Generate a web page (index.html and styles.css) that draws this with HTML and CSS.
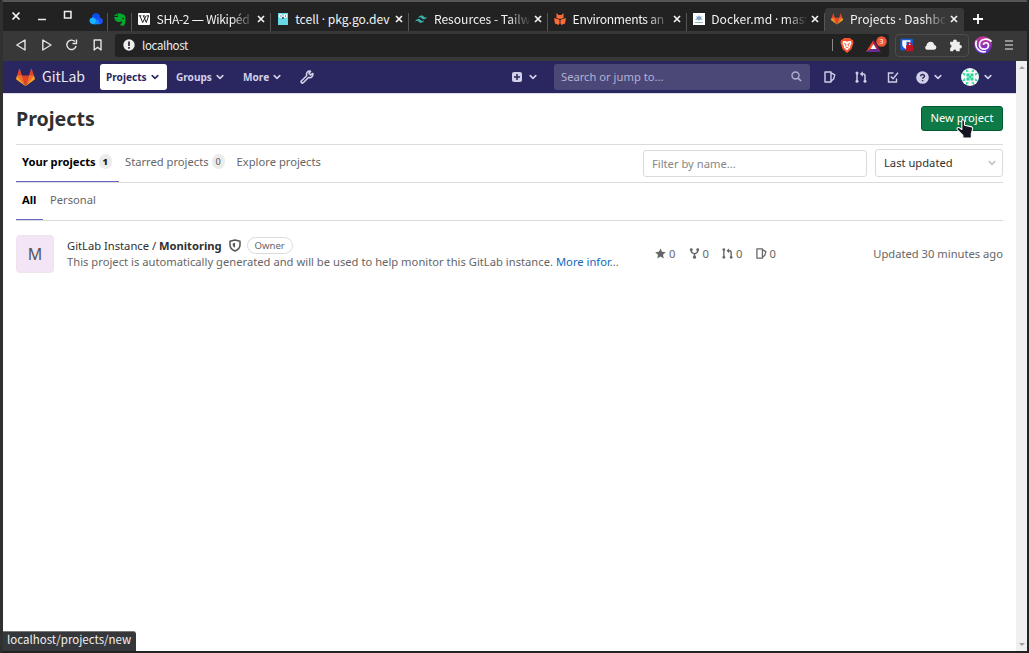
FILE: index.html
```html
<!DOCTYPE html>
<html lang="en">
<head>
<meta charset="utf-8">
<title>Projects · Dashboard · GitLab</title>
<link rel="stylesheet" href="styles.css">
</head>
<body>
<svg class="defs" width="0" height="0">
  <symbol id="tanuki" viewBox="0 0 36 36">
    <path fill="#e24329" d="M2 14l9.38 9v-9l-4-12.28c-.205-.632-1.176-.632-1.38 0z"/>
    <path fill="#e24329" d="M34 14l-9.38 9v-9l4-12.28c.205-.632 1.176-.632 1.38 0z"/>
    <path fill="#e24329" d="M18 34.38 11.38 14h13.24z"/>
    <path fill="#fc6d26" d="M18 34.38 11.38 14H2l6 8zM18 34.38 24.62 14H34l-6 8z"/>
    <path fill="#fca326" d="M2 14 .1 20.16c-.18.565 0 1.2.5 1.56l17.42 12.66zM34 14l1.9 6.16c.18.565 0 1.2-.5 1.56L18 34.38z"/>
  </symbol>
  <symbol id="chev" viewBox="0 0 10 8"><path d="M2.200 2.600 5 5.300 7.800 2.600" fill="none" stroke="currentColor" stroke-width="1.600" stroke-linecap="round" stroke-linejoin="round"/></symbol>
  <symbol id="close" viewBox="0 0 10 10"><path d="M2 2l6 6m0-6l-6 6" stroke="currentColor" stroke-width="1.700"/></symbol>
  <symbol id="door" viewBox="0 0 12 12"><path d="M1 1h6v10H1zM7 1.800l3.800 2.100L9.600 8 7 10.300" fill="none" stroke="currentColor" stroke-width="1.400" stroke-linejoin="round"/></symbol>
  <symbol id="merge" viewBox="0 0 12 12"><path d="M2 3v7M6.500 3H8.200a1.800 1.800 0 0 1 1.800 1.800V10" fill="none" stroke="currentColor" stroke-width="1.500"/><path d="M7.800.300v5.400L4.900 3z" fill="currentColor"/><circle cx="2" cy="1.900" r="1.500" fill="currentColor"/><circle cx="2" cy="10.200" r="1.500" fill="currentColor"/><circle cx="10" cy="10.200" r="1.500" fill="currentColor"/></symbol>
  <symbol id="fork" viewBox="0 0 12 12"><path d="M2.500 2v1.500Q2.500 5 6 6.500 9.500 5 9.500 3.500V2M6 6v4" fill="none" stroke="currentColor" stroke-width="1.600"/><circle cx="2.500" cy="2" r="1.600" fill="currentColor"/><circle cx="9.500" cy="2" r="1.600" fill="currentColor"/><circle cx="6" cy="10" r="1.700" fill="currentColor"/></symbol>
</svg>
<div class="window">
  <div class="tabbar">
    <div class="controls">
      <svg class="c-close" width="10" height="10"><path d="M1.500 1.500l7 7m0-7l-7 7" stroke="#fff" stroke-width="1.600"/></svg>
      <svg class="c-min" width="10" height="10"><path d="M1 8.500h8" stroke="#eee" stroke-width="1.500"/></svg>
      <svg class="c-max" width="10" height="10"><path d="M1.500 1.500h6.500v6.500h-6.500z" fill="none" stroke="#eee" stroke-width="1.500"/></svg>
    </div>
    <div class="pin pin-a"><svg width="14" height="12" viewBox="0 0 14 12"><circle cx="7" cy="4.200" r="4" fill="#0a4df0"/><circle cx="10.500" cy="8" r="3.300" fill="#1c50f5"/><path fill="#19b4ff" d="M3.500 11.300a3.400 3.400 0 0 1-.7-6.600Q5 4 6.500 6l2 2.500-2 2.800z"/><path fill="#1684ff" d="M5 11.300 8.500 6l2.500 5.300z"/></svg></div>
    <div class="pin pin-b"><svg width="12" height="13" viewBox="0 0 12 13"><path fill="#00a82d" d="M3.500 0v3H0L3 .500zM4 .500C6 0 7 .300 8 1.300c2.500.200 3.300 1 3.500 4 .100 3.500-.5 7-2 7.500H7.500C6 12.300 6 10 8 10.200V8.500C6.500 8.300 6.300 9 5.500 9 2 9 .5 7 .3 4H4z"/><circle cx="9" cy="5.500" r=".8" fill="#222"/></svg></div>
    <div class="tab"><svg class="fav" viewBox="0 0 12 12"><rect width="12" height="12" rx="1" fill="#fff"/><path d="M.8 2.800h2.500M4.800 2.800h2M8.500 2.800H11M2 3l2.700 6.500L8 3M5.500 3l2.800 6.500L10.500 3" fill="none" stroke="#222" stroke-width="1"/></svg><span class="label tight">SHA-2 <i>—</i> Wikipéd</span><svg class="x"><use href="#close"/></svg></div>
    <div class="tab"><svg class="fav" viewBox="0 0 12 12"><path d="M1 0h10v12H1z" fill="#6ad7e5"/><circle cx="3.700" cy="3" r="2" fill="#fff"/><circle cx="8.300" cy="3" r="2" fill="#fff"/><path d="M3.500 2.500h1v1h-1zM8 2.500h1v1H8zM5 4.500h2v1H5z" fill="#111"/></svg><span class="label plain">tcell <i>·</i> pkg.go.dev</span><svg class="x"><use href="#close"/></svg></div>
    <div class="tab"><svg class="fav" viewBox="0 0 12 12"><path fill="#38b2ac" d="M3 5.500q.8-3 3.300-3c2.500 0 2.500 2 4 2q1 0 2-1.200-.8 3-3.300 3c-2.500 0-2.500-2-4-2q-1 0-2 1.200zM0 9q.8-3 3.300-3c2.500 0 2.500 2 4 2q1 0 2-1.200-.8 3-3.300 3c-2.500 0-2.500-2-4-2Q1 7.800 0 9z"/></svg><span class="label">Resources - Tailw</span><svg class="x"><use href="#close"/></svg></div>
    <div class="tab"><svg class="fav" viewBox="0 0 12 12"><path fill="#ff6c37" d="M0 5l5 1.500V12L1 10.500zM12 5 7 6.500V12l4-1.500zM2.500 0l2 2h3l2-2v5L6 6 2.500 5zM5.500 7h1v4h-1z"/></svg><span class="label tight">Environments an</span><svg class="x"><use href="#close"/></svg></div>
    <div class="tab"><svg class="fav" viewBox="0 0 12 12"><path fill="#fff" d="M0 0h12v12H0z"/><path d="M2 9h8v1H2z" fill="#9bb"/><path d="M6 2l1 2 2-1-1 2 2 2-3-.5L6 8 5 6.500 2 7l2-2-1-2 2 1z" fill="#7fa3c6"/></svg><span class="label">Docker.md <i>·</i> mast</span><svg class="x"><use href="#close"/></svg></div>
    <div class="tab active"><svg class="fav"><use href="#tanuki"/></svg><span class="label">Projects <i>·</i> Dashbo</span><svg class="x"><use href="#close"/></svg></div>
    <svg class="plus" width="10" height="10"><path d="M5 0v10M0 5h10" stroke="#fff" stroke-width="1.800"/></svg>
  </div>

  <div class="toolbar">
    <svg class="navicons" width="115" height="30" viewBox="0 0 115 30" fill="none" stroke="#e4e4e4" stroke-width="1.400" stroke-linejoin="round"><path d="M22 10v10l-8.200-5zM39.800 10v10l8.200-5z"/><path d="M72 11.600a4.700 4.700 0 1 0 1.100 4.400M73.500 9.500v4h-4M91.200 10h6.800v10l-3.400-2.700L91.200 20z"/></svg>
    <div class="url">
      <svg width="12" height="12"><circle cx="6" cy="6" r="5.700" fill="#eee"/><path d="M6 2.500v4.500M6 8v1.800" stroke="#222" stroke-width="1.700"/></svg>
      <span class="host">localhost</span>
      <span class="urlsep"></span>
      <svg class="brave" width="14" height="15" viewBox="0 0 14 15"><path fill="#fb542b" d="M4 0h6l1.500 1.500L13 2l.5 3-2 6L7 15l-4.500-4-2-6L1 2l1.500-.5z"/><path fill="#fff" d="M3 3h2l2 .700L9 3h2l.5 2.500-1.500 3 .2 1L8.500 11 7 12.500 5.500 11 3.800 9.500l.2-1-1.500-3z"/><path d="M4 5.500l2 .6-.5 2.200M10 5.500l-2 .6.500 2.200M5.500 10l1.500-1 1.500 1" fill="none" stroke="#fb542b" stroke-width=".9"/></svg>
      <svg class="bat" width="22" height="18" viewBox="0 0 22 18"><path fill="#ff4724" d="M7.500 4 0 16l5-3 2.500-5z"/><path fill="#9e1f63" d="M7.500 4 15 16l-4.500-3-3-5z"/><path fill="#662d91" d="M0 16h15l-4.500-3H5z"/><path fill="#fff" d="M7.500 8 10.500 13h-6z"/><circle cx="15.500" cy="5.500" r="5.200" fill="#f05537"/><text x="13.300" y="8.300" class="badge-text">3</text></svg>
    </div>
    <div class="exts">
      <svg width="73" height="22" viewBox="0 0 73 23"><rect x="4" y="5" width="13" height="12" rx="1" fill="#175ddc"/><path fill="#fff" d="M6 6.500h8.500V11q0 3-4.200 5Q6 14 6 11z"/><path fill="#175ddc" d="M10.300 8h2.800v3.500q0 1.500-2.800 3z"/><rect x="10" y="11.500" width="7.500" height="6.500" rx="1" fill="#c4121e"/><path d="M12 12v-1.500q1.800-2.500 3.500 0V12" fill="none" stroke="#c4121e" stroke-width="1.300"/><path fill="#eee" d="M31.500 16.500a2.500 2.500 0 0 1-.2-4.600Q32 8 35.500 8q3.200 0 4 3.600a2.500 2.500 0 0 1 .2 4.900z"/><path fill="#eee" d="M56 8h3.200a1.900 1.900 0 1 1 3.700 0H66v3.500a1.800 1.800 0 1 1 0 3.500v3h-3.500a1.700 1.700 0 0 0-3.400 0H56v-3.500a1.800 1.800 0 0 0 0-3.500z"/></svg>
    </div>
    <svg class="spiral" width="18" height="18" viewBox="0 0 18 18"><defs><linearGradient id="sp" x2="0" y2="1"><stop stop-color="#d0369b"/><stop offset="1" stop-color="#5831cc"/></linearGradient></defs><circle cx="9" cy="9" r="8.800" fill="url(#sp)"/><path d="M17.500 5.500C13 1.500 5.500 3 5.500 8.800c0 5.700 8.700 5.800 9 .7.200-3.300-5-3.800-5-.5M2.500 4.500C0 12 6 17 12 15.500" fill="none" stroke="#fff" stroke-width="1.700"/></svg>
    <svg class="menu" width="8" height="10"><path d="M0 1h8M0 5h8M0 9h8" stroke="#eee" stroke-width="1.200"/></svg>
  </div>

  <div class="view">
    <div class="page">
      <nav class="navbar">
        <svg class="logo"><use href="#tanuki"/></svg>
        <span class="brand">GitLab</span>
        <div class="nav projects"><span>Projects</span><svg class="chev"><use href="#chev"/></svg></div>
        <div class="nav groups"><span>Groups</span><svg class="chev"><use href="#chev"/></svg></div>
        <div class="nav more"><span>More</span><svg class="chev"><use href="#chev"/></svg></div>
        <svg class="wrench" width="14" height="14" viewBox="0 0 14 14"><path d="M12.800 3.500 10.500 5 9 3.500 10.500 1.200C7.500.8 6 3 6.700 5.700L1.300 11q-.6 1 .2 1.700t1.700 0L8.500 7.500c3 .8 4.800-1.500 4.300-4z" fill="none" stroke="currentColor" stroke-width="1.600" stroke-linejoin="round"/></svg>
        <div class="add"><svg width="10" height="10"><rect width="10" height="10" rx="2" fill="currentColor"/><path d="M5 2v6M2 5h6" stroke="#2a265f" stroke-width="1.500"/></svg><svg class="chev"><use href="#chev"/></svg></div>
        <div class="search"><span>Search or jump to...</span><svg width="11" height="11"><circle cx="4.500" cy="4.500" r="3.500" fill="none" stroke="currentColor" stroke-width="1.400"/><path d="M7 7l3 3" stroke="currentColor" stroke-width="1.600"/></svg></div>
        <svg class="i-issues"><use href="#door"/></svg>
        <svg class="i-merge"><use href="#merge"/></svg>
        <svg class="i-todo" viewBox="0 0 12 12"><path d="M6.500 2H1.500v9h8V7.500M3.800 5.500 6 7.700 11 1.800" fill="none" stroke="currentColor" stroke-width="1.400"/></svg>
        <svg class="i-help" width="13" height="13" viewBox="0 0 13 13"><circle cx="6.500" cy="6.500" r="6.300" fill="currentColor"/><path d="M4.700 5.200c0-2.500 3.900-2.200 3.800 0-.1 1.300-1.900 1.200-1.900 2.600M6.600 8.900v1.400" fill="none" stroke="#2a265f" stroke-width="1.400"/></svg>
        <svg class="chev c1"><use href="#chev"/></svg>
        <svg class="avatar" width="18" height="18" viewBox="0 0 18 18"><circle cx="9" cy="9" r="9" fill="#f3f8f6"/><g fill="#25d49a"><path d="M5.500 5.500h3v3h-3zM9.500 5.500h3v3h-3zM5.500 9.500h3v3h-3zM9.500 9.500h3v3h-3zM8 8h2v2H8zM5 1l3 2.800H5zM13 1l-3 2.800h3zM5 17l3-2.800H5zM13 17l-3-2.800h3zM1 5l2.800 3V5zM17 5l-2.800 3V5zM1 13l2.800-3v3zM17 13l-2.800-3v3z"/></g></svg>
        <svg class="chev c2"><use href="#chev"/></svg>
      </nav>
      <main class="content">
        <header class="head"><h1><span>Projects</span></h1><a class="new"><span>New project</span></a></header>
        <div class="row-tabs">
          <div class="t on"><span>Your projects</span><b class="count">1</b></div>
          <div class="t"><span>Starred projects</span><b class="count zero">0</b></div>
          <div class="t"><span>Explore projects</span></div>
          <div class="filter"><span>Filter by name...</span></div>
          <div class="sort"><span>Last updated</span><svg width="8" height="6"><path d="M.8 1 4 4.500 7.200 1" fill="none" stroke="#bbb" stroke-width="1.400"/></svg></div>
        </div>
        <div class="row-sub"><div class="s on"><span>All</span></div><div class="s"><span>Personal</span></div></div>
        <div class="project">
          <div class="ava">M</div>
          <div class="info">
            <div class="title"><span class="name">GitLab Instance / <b>Monitoring</b></span><svg width="12" height="13" viewBox="0 0 12 13"><path d="M6 1 11 2.300V6q0 4-5 6-5-2-5-6V2.300z" fill="none" stroke="#555" stroke-width="1.500" stroke-linejoin="round"/><path d="M6 3.800v5Q3.700 7.800 3.700 6V4.400z" fill="#555"/></svg><span class="owner"><span>Owner</span></span></div>
            <div class="desc"><span>This project is automatically generated and will be used to help monitor this GitLab instance. <a>More infor</a>...</span></div>
          </div>
          <div class="stats">
            <span><svg viewBox="0 0 12 12"><path fill="currentColor" d="M6 .5l1.700 3.700 4.100.4-3.100 2.700.9 4.200L6 9.400l-3.600 2.100.9-4.200L.2 4.600l4.100-.4z"/></svg>0</span>
            <span><svg><use href="#fork"/></svg>0</span>
            <span><svg><use href="#merge"/></svg>0</span>
            <span><svg><use href="#door"/></svg>0</span>
          </div>
          <div class="updated"><span>Updated 30 minutes ago</span></div>
        </div>
      </main>
    </div>
    <div class="scroll"><i></i><i class="down"></i></div>
  </div>
  <div class="status"><span>localhost/projects/new</span></div>
  <svg class="cursor" width="20" height="21" viewBox="0 0 18 20"><path d="M6 1q2-.8 2.500 1v4l7 1.500q1 .5.8 2L15 14v4H7v-2.500L1.500 10Q1 8 3 8l3 2z" fill="#141521" stroke="#fff" stroke-width="1" stroke-linejoin="round"/></svg>
</div>
</body>
</html>
```
FILE: styles.css
```css
* { box-sizing: border-box; }
body { margin: 0; width: 1029px; height: 653px; overflow: hidden; background: #222; font: 11.2px "Noto Sans", sans-serif; color: #303030; }
.defs { position: absolute; }
svg { flex: none; display: block; }
span { white-space: nowrap; }
.window { position: relative; height: 653px; border: solid #222; border-width: 2px 2px 2px 3px; border-top-color: #555; border-left-color: #303030; border-radius: 4px 4px 0 0; display: flex; flex-direction: column; }
.tabbar { height: 29px; flex: none; display: flex; align-items: flex-end; background: #222; color: #f2f2f2; font: 12.1px "Noto Sans CJK SC", sans-serif; }
.controls { width: 85px; height: 29px; display: flex; padding: 9px 0 0 8px; gap: 16px; }
.c-max { margin-top: -1px; }
.pin { height: 18px; }
.pin-a { width: 20px; border-right: 1px solid #555; padding-left: 1px; }
.pin-b { width: 24px; border-right: 1px solid #555; padding-left: 6px; }
.tab { width: 138.7px; height: 18px; flex: none; border-right: 1px solid #555; display: flex; align-items: center; padding: 0 4px 6px 6px; }
.fav { width: 12px; height: 12px; margin-right: 6.500px; }
.label { flex: 1; min-width: 0; line-height: 18px; -webkit-mask-image: linear-gradient(90deg, #000 78%, rgba(0,0,0,.1)); mask-image: linear-gradient(90deg, #000 78%, rgba(0,0,0,.1)); }
.label i { font-family: "Noto Sans"; font-style: normal; }
.tight { letter-spacing: -.3px; }
.plain { -webkit-mask-image: none; mask-image: none; }
.x { width: 10px; height: 10px; margin-left: 4px; }
.tab.active { height: 23px; background: #383838; border: 0; border-radius: 3px 3px 0 0; padding: 0 5px 1px 6px; }
.plus { margin: 0 0 7px 9px; }
.toolbar { height: 30px; flex: none; display: flex; align-items: center; background: #383838; padding-bottom: 2px; }
.navicons { margin: 0 -3px 0 0; }
.url { width: 774px; height: 23px; background: #222; border-radius: 3px; display: flex; align-items: center; padding: 0 1px 0 8px; color: #eee; font: 11.500px "Noto Sans CJK SC", sans-serif; letter-spacing: -.35px; }
.host { margin-left: 7px; flex: 1; padding-bottom: 1px; }
.urlsep { width: 1px; height: 12px; background: #888; margin-right: 7px; }
.bat { margin-left: 12px; }
.badge-text { font: 7.500px "Noto Sans"; fill: #fff; }
.exts { width: 74px; height: 23px; margin-left: 6px; border: 1px solid #4d4d4d; border-radius: 4px; display: flex; overflow: hidden; }
.exts svg { margin: -1px 0 0 -1px; }
.spiral { margin-left: 5px; }
.menu { margin-left: 13px; }
.view { flex: 1; display: flex; background: #fff; min-height: 0; }
.page { flex: 1; }
.scroll { width: 11px; background: #f0f0f0; display: flex; flex-direction: column; justify-content: space-between; align-items: center; padding: 5px 0; }
.scroll i { border: 3px solid transparent; border-top: 0; border-bottom-color: #a0a0a0; }
.scroll .down { transform: rotate(180deg); }
.navbar { height: 33px; background: #2a265f; border-bottom: 1px solid #dcdce6; color: #d1d0e8; display: flex; align-items: center; padding-left: 13px; }
.logo { width: 19px; height: 19px; flex: none; }
.brand { width: 65px; flex: none; padding-left: 7px; color: #e8e8f2; font: 14px "Noto Sans CJK SC", sans-serif; line-height: 20px; padding-bottom: 2px; }
.chev { width: 10px; height: 8px; }
.nav { display: flex; align-items: center; justify-content: space-between; font-weight: 700; font-size: 10.100px; }
.projects { width: 67px; height: 26px; background: #fff; color: #2a265f; border-radius: 3px; padding: 0 7px 0 6px; }
.groups { width: 49px; margin-left: 9px; }
.more { width: 39px; margin-left: 18px; }
.wrench { margin-left: 18px; }
.add { width: 26px; margin-left: 198px; display: flex; justify-content: space-between; align-items: center; }
.search { width: 256px; height: 26px; margin-left: 16px; background: #4b4878; border-radius: 3px; display: flex; justify-content: space-between; align-items: center; padding: 0 8px 1px 7px; color: #b3b1d1; font-size: 11.200px; }
.i-issues, .i-merge, .i-todo { width: 12px; height: 12px; }
.i-issues { margin-left: 14px; }
.i-merge { margin-left: 19px; }
.i-todo { margin-left: 20px; }
.i-help { margin-left: 17px; }
.c1 { margin-left: 4px; }
.avatar { margin-left: 18px; }
.c2 { margin-left: 4px; }
.content { padding: 0 13px; }
.head { height: 51px; display: flex; justify-content: space-between; align-items: center; border-bottom: 1px solid #dbdbdb; }
h1 { margin: 0; font-size: 19.600px; line-height: 28px; }
.new { width: 82px; height: 25px; margin-top: -2px; background: #0e7a48; border: 1px solid #00592f; border-radius: 3px; color: #fff; display: flex; justify-content: center; align-items: center; padding-bottom: 1px; }
.row-tabs { height: 38px; border-bottom: 1px solid #dbdbdb; display: flex; align-items: center; color: #666; }
.t { height: 37px; display: flex; align-items: center; padding: 0 6px 4px; }
.on { color: #000; font-weight: 700; border-bottom: 1px solid #6666c4; }
.t.on { padding-bottom: 3px; width: 103px; }
.count { margin-left: 3px; width: 13px; height: 15px; border-radius: 8px; background: #ececec; font-size: 9.200px; display: flex; align-items: center; justify-content: center; color: #222; }
.zero { font-weight: 400; color: #555; }
.filter { width: 224px; height: 27px; margin-left: auto; border: 1px solid #dbdbdb; border-radius: 3px; display: flex; align-items: center; padding-left: 8px; color: #868686; }
.sort { width: 128px; height: 28px; margin-left: 8px; margin-top: -1px; border: 1px solid #dbdbdb; border-radius: 3px; display: flex; justify-content: space-between; align-items: center; padding: 0 6px 1px 8px; color: #303030; }
.row-sub { height: 38px; border-bottom: 1px solid #dbdbdb; display: flex; color: #666; }
.s { height: 37px; display: flex; align-items: center; padding: 0 7px 4px 7px; }
.s.on { width: 27px; padding: 0 0 3px 6px; }
.project { display: flex; padding-top: 14px; color: #666; }
.ava { width: 38px; height: 38px; border: 1px solid #eee4ee; border-radius: 4px; background: #f3e5f5; color: #555; font-size: 16px; display: flex; align-items: center; justify-content: center; }
.info { width: 588px; margin-left: 13px; padding-top: 1px; }
.title { display: flex; align-items: center; height: 18px; color: #303030; }
.title svg { margin-left: 7px; }
.owner { width: 46px; height: 17px; margin-left: 6px; border: 1px solid #dbdbdb; border-radius: 9px; color: #666; font-size: 9.600px; display: flex; align-items: center; justify-content: center; }
.desc { line-height: 16px; letter-spacing: .012px; }
.desc a { color: #1068bf; }
.stats { display: flex; height: 37px; align-items: center; }
.stats span { width: 33.500px; display: flex; align-items: center; gap: 3px; }
.stats svg { width: 11px; height: 11px; }
.updated { margin-left: auto; height: 37px; display: flex; align-items: center; }
.status { position: absolute; left: 0; bottom: 0; width: 133px; height: 20px; background: #36373a; border-top: 1px solid #777; border-radius: 0 3px 0 0; color: #f0f0f0; font: 11.500px "Noto Sans CJK SC", sans-serif; line-height: 15px; padding-left: 4px; }
.cursor { position: absolute; left: 952px; top: 117px; }
```
